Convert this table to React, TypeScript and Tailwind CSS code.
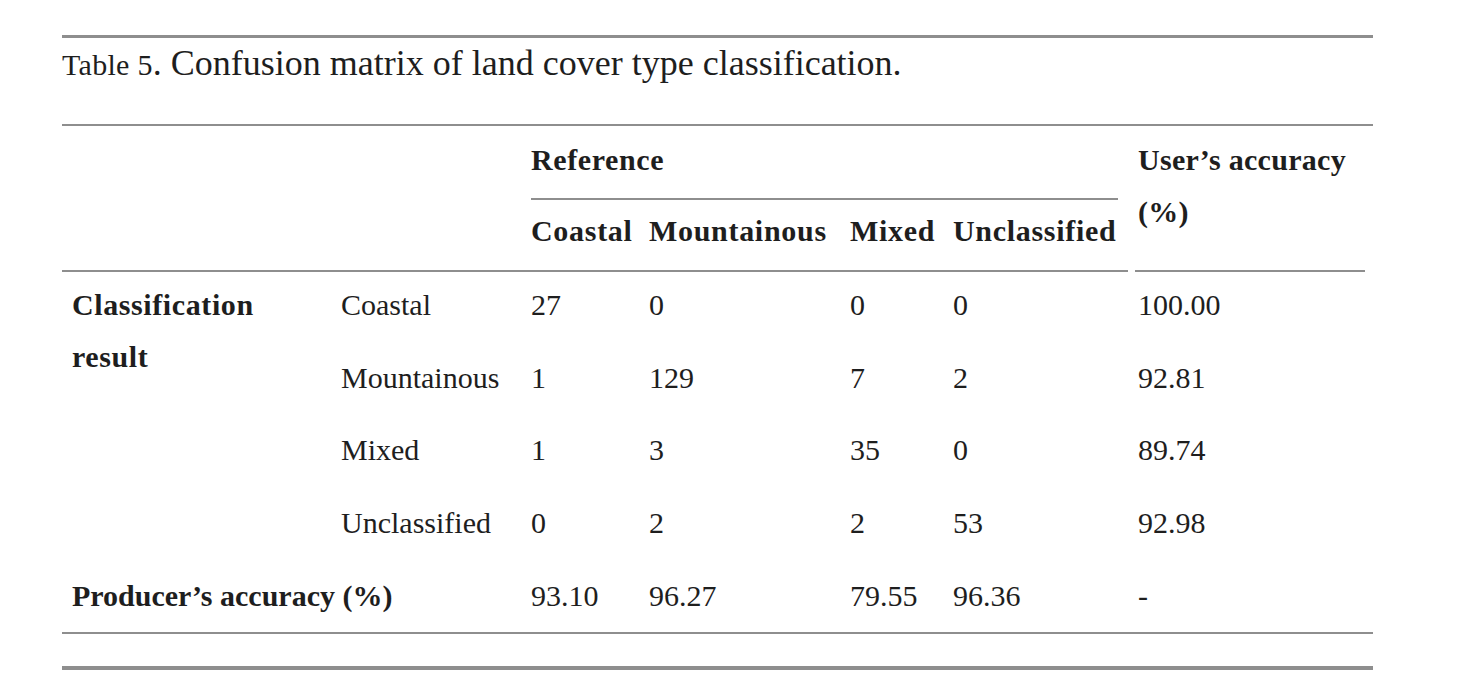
const rows = [
  { label: "Coastal", values: ["27", "0", "0", "0"], users: "100.00" },
  { label: "Mountainous", values: ["1", "129", "7", "2"], users: "92.81" },
  { label: "Mixed", values: ["1", "3", "35", "0"], users: "89.74" },
  { label: "Unclassified", values: ["0", "2", "2", "53"], users: "92.98" },
];

const producers = ["93.10", "96.27", "79.55", "96.36"];

// row start lines inside the grid (header takes lines 1-2)
const rowStart = ["row-start-3", "row-start-4", "row-start-5", "row-start-6"];
const colStart = ["col-start-3", "col-start-4", "col-start-5", "col-start-6"];

export default function App() {
  return (
    <div
      className="min-h-screen bg-white px-[62px] pt-[35px] text-[#1e1e1e]"
      style={{ fontFamily: '"Liberation Serif", "Times New Roman", serif' }}
    >
      <div className="h-[3px] w-[1311px] bg-[#8e8e8e]" />
      <div className="mt-[3px] h-[44px] leading-[44px] whitespace-nowrap">
        <span className="text-[30px] tracking-[0.3px]">Table 5</span>
        <span className="text-[36px]">. Confusion matrix of land cover type classification.</span>
      </div>

      <div className="mt-[39px] grid w-[1311px] grid-cols-[269px_190px_118px_201px_103px_185px_245px] grid-rows-[74px_72px_73px_72px_73px_73px_69px] border-y-2 border-[#8e8e8e] text-[30px] leading-[52px]">
        {/* header */}
        <div className="col-span-2 col-start-1 row-span-2 row-start-1 border-b-2 border-[#8e8e8e]" />
        <div className="col-span-4 col-start-3 row-start-1 mx-[10px] border-b-2 border-[#8e8e8e] pt-[8px] font-bold tracking-[0.6px]">
          Reference
        </div>
        {["Coastal", "Mountainous", "Mixed", "Unclassified"].map((h, i) => (
          <div
            key={h}
            className={`${colStart[i]} row-start-2 border-b-2 border-[#8e8e8e] pl-[10px] pt-[5px] font-bold tracking-[0.7px] whitespace-nowrap`}
          >
            {h}
          </div>
        ))}
        <div className="col-start-7 row-span-2 row-start-1 ml-[7px] mr-[8px] border-b-2 border-[#8e8e8e] pl-[3px] pt-[8px] font-bold tracking-[0.3px]">
          User’s accuracy
          <br />
          (%)
        </div>

        {/* body */}
        <div className="col-start-1 row-span-4 row-start-3 pl-[10px] pt-[7px] font-bold tracking-[0.6px]">
          Classification
          <br />
          result
        </div>
        {rows.map((r, ri) => (
          <div key={r.label} className="contents">
            <div className={`col-start-2 ${rowStart[ri]} pl-[10px] pt-[7px] whitespace-nowrap`}>{r.label}</div>
            {r.values.map((v, vi) => (
              <div key={vi} className={`${colStart[vi]} ${rowStart[ri]} pl-[10px] pt-[7px]`}>
                {v}
              </div>
            ))}
            <div className={`col-start-7 ${rowStart[ri]} pl-[10px] pt-[7px]`}>{r.users}</div>
          </div>
        ))}

        {/* producer's accuracy */}
        <div className="col-span-2 col-start-1 row-start-7 pl-[10px] pt-[7px] font-bold whitespace-nowrap">
          Producer’s accuracy (%)
        </div>
        {producers.map((p, i) => (
          <div key={p} className={`${colStart[i]} row-start-7 pl-[10px] pt-[7px]`}>
            {p}
          </div>
        ))}
        <div className="col-start-7 row-start-7 pl-[10px] pt-[7px]">-</div>
      </div>

      <div className="mt-[32px] h-[4px] w-[1311px] bg-[#8e8e8e]" />
    </div>
  );
}
